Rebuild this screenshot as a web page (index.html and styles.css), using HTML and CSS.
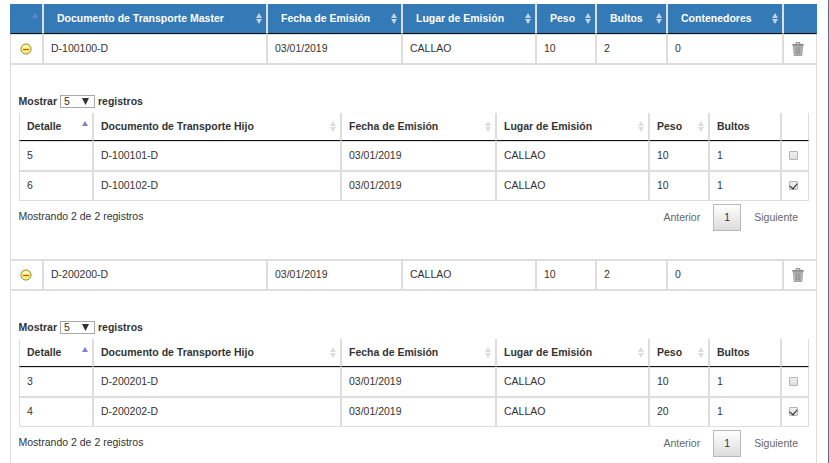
FILE: index.html
```html
<!DOCTYPE html>
<html lang="es">
<head>
<meta charset="UTF-8">
<meta name="viewport" content="width=device-width, initial-scale=1.0">
<title>Documentos de Transporte</title>
<link rel="stylesheet" href="styles.css">
</head>
<body>

<svg width="0" height="0" class="defs">
    <symbol id="sort" viewBox="0 0 6 11">
        <path d="M3 0L6 5H0zM3 11L0 6h6z"/>
    </symbol>
    <symbol id="asc" viewBox="0 0 6 11">
        <path d="M3 0L6 5H0z"/>
    </symbol>
    <symbol id="arrow" viewBox="0 0 7 7">
        <path d="M0 0h7L3.500 7z"/>
    </symbol>
    <symbol id="minus" viewBox="0 0 12 12">
        <circle cx="6" cy="6" r="5.1" fill="#f8f27a" stroke="#85823c" stroke-width=".9"/>
        <path d="M2.500 4.500a4 4 0 0 1 7 0z" fill="#ffffc0"/>
        <path d="M3 6.500h6" stroke="#cc4a1c" stroke-width="1.200"/>
    </symbol>
    <symbol id="trash" viewBox="0 0 12 14">
        <path d="M4.2 2V.7h3.6V2" fill="none" stroke="#777" stroke-width="1"/>
        <path d="M1.4 4h9.2l-.8 9.500H2.200z" fill="#c4c4c4" stroke="#8d8d8d" stroke-width=".8"/>
        <path d="M.3 1.900h11.400v1.900H.3z" fill="#8c8c8c"/>
        <path d="M4 5l.2 7.500M6 5v7.500M8 5l-.2 7.500" stroke="#777" stroke-width=".9"/>
    </symbol>
</svg>

<div class="page">
<table class="master">
    <colgroup>
        <col style="width:33px"><col style="width:224px"><col style="width:135px"><col style="width:134px"><col style="width:60px"><col style="width:71px"><col style="width:116px"><col style="width:34px">
    </colgroup>
    <thead>
        <tr>
            <th><div class="head"><span></span><svg class="sort asc"><use href="#asc"/></svg></div></th>
            <th><div class="head">Documento de Transporte Master<svg class="sort"><use href="#sort"/></svg></div></th>
            <th><div class="head">Fecha de Emisión<svg class="sort"><use href="#sort"/></svg></div></th>
            <th><div class="head">Lugar de Emisión<svg class="sort"><use href="#sort"/></svg></div></th>
            <th><div class="head">Peso<svg class="sort"><use href="#sort"/></svg></div></th>
            <th><div class="head">Bultos<svg class="sort"><use href="#sort"/></svg></div></th>
            <th><div class="head">Contenedores<svg class="sort"><use href="#sort"/></svg></div></th>
            <th></th>
        </tr>
    </thead>
    <tbody>
        <tr>
            <td class="icon"><svg class="minus"><use href="#minus"/></svg></td>
            <td>D-100100-D</td>
            <td>03/01/2019</td>
            <td>CALLAO</td>
            <td>10</td>
            <td>2</td>
            <td>0</td>
            <td class="icon"><svg class="trash"><use href="#trash"/></svg></td>
        </tr>
        <tr>
            <td class="child" colspan="8">
                <div class="length">Mostrar <span class="select">5<svg><use href="#arrow"/></svg></span> registros</div>
                <table class="detail">
                    <colgroup>
                        <col style="width:74px"><col style="width:248px"><col style="width:155px"><col style="width:153px"><col style="width:60px"><col style="width:72px"><col style="width:28px">
                    </colgroup>
                    <thead>
                        <tr>
                            <th><div class="head">Detalle<svg class="sort asc"><use href="#asc"/></svg></div></th>
                            <th><div class="head">Documento de Transporte Hijo<svg class="sort"><use href="#sort"/></svg></div></th>
                            <th><div class="head">Fecha de Emisión<svg class="sort"><use href="#sort"/></svg></div></th>
                            <th><div class="head">Lugar de Emisión<svg class="sort"><use href="#sort"/></svg></div></th>
                            <th><div class="head">Peso<svg class="sort"><use href="#sort"/></svg></div></th>
                            <th><div class="head">Bultos</div></th>
                            <th></th>
                        </tr>
                    </thead>
                    <tbody>
                        <tr><td>5</td><td>D-100101-D</td><td>03/01/2019</td><td>CALLAO</td><td>10</td><td>1</td><td><input type="checkbox"></td></tr>
                        <tr><td>6</td><td>D-100102-D</td><td>03/01/2019</td><td>CALLAO</td><td>10</td><td>1</td><td><input type="checkbox" checked></td></tr>
                    </tbody>
                </table>
                <div class="footer">
                    <div class="info">Mostrando 2 de 2 registros</div>
                    <div class="paginate"><a>Anterior</a><a class="current">1</a><a>Siguiente</a></div>
                </div>
            </td>
        </tr>
        <tr>
            <td class="icon"><svg class="minus"><use href="#minus"/></svg></td>
            <td>D-200200-D</td>
            <td>03/01/2019</td>
            <td>CALLAO</td>
            <td>10</td>
            <td>2</td>
            <td>0</td>
            <td class="icon"><svg class="trash"><use href="#trash"/></svg></td>
        </tr>
        <tr>
            <td class="child" colspan="8">
                <div class="length">Mostrar <span class="select">5<svg><use href="#arrow"/></svg></span> registros</div>
                <table class="detail">
                    <colgroup>
                        <col style="width:74px"><col style="width:248px"><col style="width:155px"><col style="width:153px"><col style="width:60px"><col style="width:72px"><col style="width:28px">
                    </colgroup>
                    <thead>
                        <tr>
                            <th><div class="head">Detalle<svg class="sort asc"><use href="#asc"/></svg></div></th>
                            <th><div class="head">Documento de Transporte Hijo<svg class="sort"><use href="#sort"/></svg></div></th>
                            <th><div class="head">Fecha de Emisión<svg class="sort"><use href="#sort"/></svg></div></th>
                            <th><div class="head">Lugar de Emisión<svg class="sort"><use href="#sort"/></svg></div></th>
                            <th><div class="head">Peso<svg class="sort"><use href="#sort"/></svg></div></th>
                            <th><div class="head">Bultos</div></th>
                            <th></th>
                        </tr>
                    </thead>
                    <tbody>
                        <tr><td>3</td><td>D-200201-D</td><td>03/01/2019</td><td>CALLAO</td><td>10</td><td>1</td><td><input type="checkbox"></td></tr>
                        <tr><td>4</td><td>D-200202-D</td><td>03/01/2019</td><td>CALLAO</td><td>20</td><td>1</td><td><input type="checkbox" checked></td></tr>
                    </tbody>
                </table>
                <div class="footer">
                    <div class="info">Mostrando 2 de 2 registros</div>
                    <div class="paginate"><a>Anterior</a><a class="current">1</a><a>Siguiente</a></div>
                </div>
            </td>
        </tr>
    </tbody>
</table>
</div>

</body>
</html>
```
FILE: styles.css
```css
* {
    box-sizing: border-box;
}

body {
    margin: 0;
    background: #fff;
    color: #333;
    font-family: "Liberation Sans", Arial, sans-serif;
    font-size: 10.5px;
    line-height: 15px;
}

.defs {
    display: block;
}

.page {
    height: 100vh;
    padding: 4px 0 0 10px;
    border-right: 1px solid #337ab7;
    overflow: hidden;
}

table {
    table-layout: fixed;
    border-collapse: separate;
    border-spacing: 0;
}

.master {
    width: 807px;
}

th,
td {
    height: 30px;
    padding: 0 7px;
    border: 1px solid #ddd;
    text-align: left;
    vertical-align: middle;
}

td {
    padding-bottom: 2px;
}

th {
    border-top: 0;
    border-bottom: 1px solid #111;
}

.head {
    display: flex;
    align-items: center;
    justify-content: space-between;
    white-space: nowrap;
}

.sort {
    flex: none;
    width: 6px;
    height: 11px;
    fill: #ddd;
}

.asc {
    fill: #8080d0;
}

.master > thead th {
    padding: 0 4px 0 13px;
    background: #337ab7;
    color: #fff;
}

.master > thead .sort {
    fill: #c3d3e4;
}

.master > thead .asc {
    fill: #6f7fd3;
}

.master > thead th:first-child {
    border-left-color: #337ab7;
}

.master > thead th:last-child {
    border-right-color: #337ab7;
}

td.icon {
    padding: 0 1px 0 0;
    text-align: center;
}

td.icon:last-child {
    padding-right: 4px;
}

.icon svg {
    display: block;
    margin: 0 auto;
}

.minus {
    width: 12px;
    height: 12px;
}

.trash {
    width: 12px;
    height: 14px;
}

td.child {
    height: 196px;
    padding: 29px 7px 0 8px;
    vertical-align: top;
}

.length {
    display: flex;
    align-items: center;
    gap: 3px;
    height: 15px;
    margin-bottom: 4px;
    font-weight: bold;
}

.length,
.info {
    margin-left: -.5px;
}

.select {
    display: flex;
    align-items: center;
    justify-content: space-between;
    width: 35px;
    height: 13px;
    padding: 0 5px 0 3px;
    border: 1px solid #a9a9a9;
    font-weight: normal;
}

.select svg {
    width: 7px;
    height: 7px;
    fill: #333;
}

.detail {
    width: 790px;
}

.detail th {
    height: 28px;
    padding: 0 4px 0 7px;
}

.detail .asc {
    margin-bottom: 1px;
}

input[type="checkbox"] {
    display: flex;
    justify-content: center;
    align-items: flex-start;
    appearance: none;
    width: 9px;
    height: 9px;
    margin: 1px 0 0;
    border: 1px solid #b4b4b4;
    border-radius: 1px;
    background: linear-gradient(#f0f0f0, #dedede);
}

input[type="checkbox"]:checked::after {
    content: "";
    width: 3.5px;
    height: 6px;
    border: solid #222;
    border-width: 0 1.8px 1.8px 0;
    transform: translateY(-.5px) rotate(40deg);
}

.footer {
    display: flex;
    justify-content: space-between;
    padding-top: 3px;
}

.info {
    padding-top: 5px;
}

.paginate {
    display: flex;
    gap: 2px;
}

.paginate a {
    height: 27px;
    padding: 5px 10px;
    border: 1px solid transparent;
    color: #666;
}

.paginate .current {
    width: 28px;
    padding: 5px 0;
    border-color: #b8b8b8;
    background: linear-gradient(#fff, #dcdcdc);
    color: #333;
    text-align: center;
}
```
